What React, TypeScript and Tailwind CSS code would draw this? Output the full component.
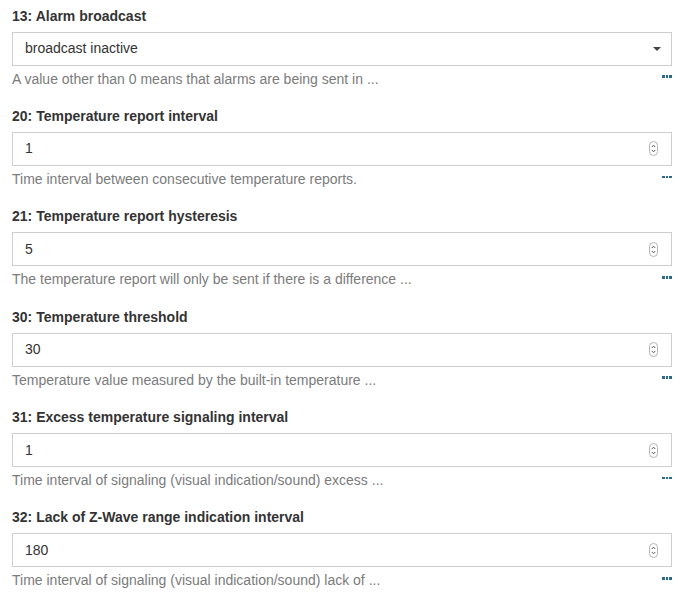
type Param = {
  id: number;
  label: string;
  value: string;
  description: string;
  kind: 'select' | 'number';
};

const params: Param[] = [
  {
    id: 13,
    label: 'Alarm broadcast',
    value: 'broadcast inactive',
    description: 'A value other than 0 means that alarms are being sent in ...',
    kind: 'select',
  },
  {
    id: 20,
    label: 'Temperature report interval',
    value: '1',
    description: 'Time interval between consecutive temperature reports.',
    kind: 'number',
  },
  {
    id: 21,
    label: 'Temperature report hysteresis',
    value: '5',
    description: 'The temperature report will only be sent if there is a difference ...',
    kind: 'number',
  },
  {
    id: 30,
    label: 'Temperature threshold',
    value: '30',
    description: 'Temperature value measured by the built-in temperature ...',
    kind: 'number',
  },
  {
    id: 31,
    label: 'Excess temperature signaling interval',
    value: '1',
    description: 'Time interval of signaling (visual indication/sound) excess ...',
    kind: 'number',
  },
  {
    id: 32,
    label: 'Lack of Z-Wave range indication interval',
    value: '180',
    description: 'Time interval of signaling (visual indication/sound) lack of ...',
    kind: 'number',
  },
];

function SpinIcon() {
  return (
    <svg width="9" height="15" viewBox="0 0 9 15" className="block">
      <rect x="0.5" y="0.5" width="8" height="14" rx="4" fill="#fff" stroke="#b5b5b5" />
      <path d="M2.8 6 L4.5 4.2 L6.2 6" fill="none" stroke="#555" strokeWidth="1" />
      <path d="M2.8 9 L4.5 10.8 L6.2 9" fill="none" stroke="#555" strokeWidth="1" />
    </svg>
  );
}

function Caret() {
  return (
    <svg width="8" height="4" viewBox="0 0 8 4" className="block">
      <path d="M0 0 H8 L4 4 Z" fill="#444" />
    </svg>
  );
}

function MoreDots() {
  return (
    <div className="flex gap-[1px]">
      <span className="w-[2.7px] h-[2.7px] bg-[#2b6a8c]" />
      <span className="w-[2.7px] h-[2.7px] bg-[#2b6a8c]" />
      <span className="w-[2.7px] h-[2.7px] bg-[#2b6a8c]" />
    </div>
  );
}

function ParamField({ param }: { param: Param }) {
  const isSelect = param.kind === 'select';
  return (
    <div className="mb-[21.4px]">
      <div className="text-[14px] leading-[16px] font-bold text-[#333]">
        {param.id}: {param.label}
      </div>
      <div
        className={`mt-2 h-[34px] border border-[#cdcdd2] bg-white flex items-center pl-3 ${
          isSelect ? 'pr-[10px]' : 'pr-[13px]'
        }`}
      >
        <span className="flex-1 text-[14px] text-[#333]">{param.value}</span>
        {isSelect ? <Caret /> : <SpinIcon />}
      </div>
      <div className="mt-[5px] flex items-center justify-between h-4">
        <span className="text-[14px] leading-[16px] text-[#7b7b7b]">{param.description}</span>
        <div className="-mt-[4px]">
          <MoreDots />
        </div>
      </div>
    </div>
  );
}

export default function App() {
  return (
    <div
      className="bg-white w-[695px] h-[605px] overflow-hidden pt-[7.5px] pl-3 pr-[23px]"
      style={{ fontFamily: '"Liberation Sans", Arial, sans-serif' }}
    >
      {params.map(p => (
        <ParamField key={p.id} param={p} />
      ))}
    </div>
  );
}
